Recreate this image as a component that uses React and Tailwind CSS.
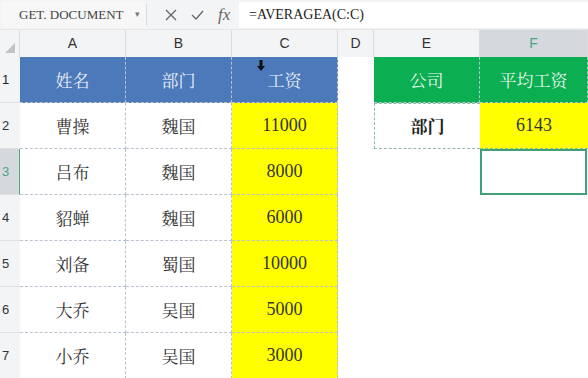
import React from "react";

const cols = ["A", "B", "C", "D", "E", "F"];

const rows = [
  ["曹操", "魏国", "11000"],
  ["吕布", "魏国", "8000"],
  ["貂蝉", "魏国", "6000"],
  ["刘备", "蜀国", "10000"],
  ["大乔", "吴国", "5000"],
  ["小乔", "吴国", "3000"],
];

const cjk = { fontFamily: '"Noto Serif CJK SC", "Noto Sans CJK SC", serif' };
const num = { fontFamily: '"Liberation Serif", "DejaVu Serif", "Times New Roman", serif' };

const cell = "flex items-center justify-center border-r border-b border-dashed border-[#b9c3cf]";

const App = () => {
  return (
    <div className="w-[588px] h-[378px] overflow-hidden bg-white text-[#222]" style={{ fontFamily: '"Liberation Sans", Arial, sans-serif' }}>
      {/* formula bar */}
      <div className="flex h-[30px] items-center bg-[#f3f4f5] border-b border-[#e2e4e6]">
        <div className="flex items-center justify-between w-[144px] h-[26px] ml-[2px] pl-[17px] pr-[6px] bg-[#f7f7f8]">
          <span className="text-[13px] text-[#444]" style={num}>GET. DOCUMENT</span>
          <span className="text-[9px] text-[#777]">▾</span>
        </div>
        <div className="w-px h-[22px] bg-[#dcdcdc]" />
        <div className="flex items-center gap-[14px] pl-[18px] w-[92px] text-[#666]">
          <svg width="12" height="12" viewBox="0 0 12 12"><path d="M1 1L11 11M11 1L1 11" stroke="#666" strokeWidth="1.3" fill="none" /></svg>
          <svg width="13" height="10" viewBox="0 0 13 10"><path d="M1 5L5 9L12 1" stroke="#666" strokeWidth="1.3" fill="none" /></svg>
          <span className="text-[17px] italic text-[#666]" style={{ fontFamily: '"Liberation Serif", "DejaVu Serif", serif' }}>fx</span>
        </div>
        <div className="flex-1 h-[26px] flex items-center pl-[10px] bg-white">
          <span className="text-[14px] text-[#222]" style={num}>=AVERAGEA(C:C)</span>
        </div>
      </div>

      {/* grid */}
      <div className="grid grid-cols-[20px_106px_106px_106px_36px_106px_108px] grid-rows-[27px_repeat(7,46px)]">
        {/* column headers */}
        <div className="flex items-end justify-end p-[4px] bg-[#f3f4f5] border-r border-[#dcdcdc]">
          <div className="w-0 h-0 border-l-[10px] border-l-transparent border-b-[10px] border-b-[#c4c4c4]" />
        </div>
        {cols.map((c) => (
          <div
            key={c}
            className={`flex items-center justify-center text-[14px] border-r border-[#dcdcdc] ${
              c === "F" ? "bg-[#d5d8dc] text-[#4aa682]" : "bg-[#f3f4f5] text-[#333]"
            }`}
          >
            {c}
          </div>
        ))}

        {/* row 1 */}
        <div className="flex items-center justify-start pl-[2px] text-[13px] bg-[#f3f4f5] border-b border-[#e0e0e0]">1</div>
        <div className={`${cell} bg-[#4c79b9] text-[#e9eff8] text-[17px]`} style={cjk}>姓名</div>
        <div className={`${cell} bg-[#4c79b9] text-[#e9eff8] text-[17px]`} style={cjk}>部门</div>
        <div className={`${cell} bg-[#4c79b9] text-[#e9eff8] text-[17px] relative`} style={cjk}>
          <svg className="absolute left-[25px] top-[3px]" width="8" height="11" viewBox="0 0 8 11">
            <path d="M2.5 0H5.5V6H8L4 11L0 6H2.5Z" fill="#111" />
          </svg>
          工资
        </div>
        <div />
        <div className={`${cell} bg-[#0bae50] text-[#e9f7ee] text-[17px]`} style={cjk}>公司</div>
        <div className={`${cell} bg-[#0bae50] text-[#e9f7ee] text-[17px]`} style={cjk}>平均工资</div>

        {rows.map((r, i) => {
          const n = i + 2;
          const sel = n === 3;
          return (
            <React.Fragment key={n}>
              <div
                className={`flex items-center pl-[2px] text-[13px] border-b border-[#e0e0e0] ${
                  sel ? "bg-[#d5d8dc] text-[#4aa682] border-r border-r-[#4aa682]" : "bg-[#f3f4f5] text-[#333]"
                }`}
              >
                {n}
              </div>
              <div className={`${cell} text-[17px] text-[#333]`} style={cjk}>{r[0]}</div>
              <div className={`${cell} text-[17px] text-[#333]`} style={cjk}>{r[1]}</div>
              <div className={`${cell} bg-[#ffff00] text-[18px] text-[#333]`} style={num}>{r[2]}</div>
              <div />
              {n === 2 ? (
                <>
                  <div className="flex items-center justify-center border border-dashed border-[#8fb8a6] border-r-0 text-[17px] font-bold text-[#222]" style={cjk}>部门</div>
                  <div className="flex items-center justify-center bg-[#ffff00] border-b border-dashed border-[#8fb8a6] text-[18px] text-[#333]" style={num}>6143</div>
                </>
              ) : n === 3 ? (
                <>
                  <div />
                  <div className="border-2 border-[#3f9f78] mr-[1px]" />
                </>
              ) : (
                <>
                  <div />
                  <div />
                </>
              )}
            </React.Fragment>
          );
        })}
      </div>
    </div>
  );
};

export default App;
